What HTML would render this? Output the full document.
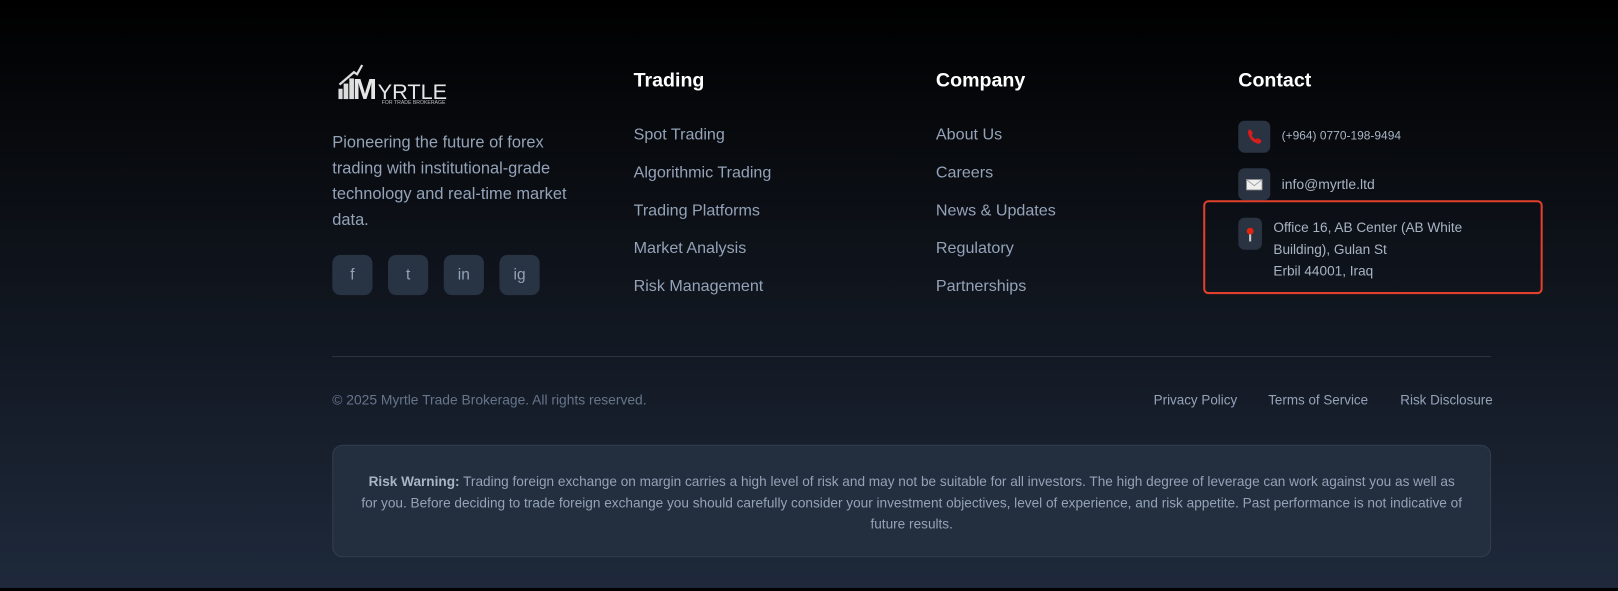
<!DOCTYPE html>
<html><head><meta charset="utf-8"><style>
*{margin:0;padding:0;box-sizing:border-box}
html,body{width:1618px;height:591px;overflow:hidden;background:#000}
body{font-family:"Liberation Sans",sans-serif;position:relative}
.bg{position:absolute;left:0;top:0;width:1618px;height:588px;background:linear-gradient(180deg,#000 0%,#0d1118 40%,#1e293b 100%)}
.w{position:absolute;left:0;top:0;width:1568px;height:573px;transform:scale(1.0319);transform-origin:0 0}
.a{position:absolute}
.t{color:#94a3b8}
h3{position:absolute;color:#fff;font-size:19px;font-weight:bold;top:68px}
.lk{position:absolute;color:#94a3b8;font-size:15.6px}
.soc{position:absolute;top:247px;width:39px;height:39px;border-radius:8px;background:#283344;color:#94a3b8;font-size:15px;text-align:center;line-height:39px}
.ic{position:absolute;width:31px;height:31px;border-radius:6px;background:#2a3342}
</style></head><body>
<div class="bg"></div>
<div class="w">
<div class="a" style="left:326px;top:60px;width:110px;height:42px">
<svg width="110" height="42" viewBox="0 0 110 42">
<rect x="2" y="26" width="4" height="10" fill="#ddd"/><rect x="7" y="21" width="4.5" height="15" fill="#ddd"/><rect x="12.5" y="16" width="4.5" height="20" fill="#ddd"/>
<path d="M3 22 L17 10 L20 12 L25 3" stroke="#ddd" stroke-width="2.2" fill="none"/>
<text x="16" y="36" fill="#e5e5e5" font-family="Liberation Sans" font-weight="bold" font-size="28">M</text>
<text x="40" y="36" fill="#e5e5e5" font-family="Liberation Sans" font-size="21">YRTLE</text>
<text x="44" y="41" fill="#bbb" font-family="Liberation Sans" font-size="5">FOR TRADE BROKERAGE</text>
</svg></div>
<div class="a t" style="left:322px;top:126px;width:240px;font-size:15.9px;line-height:25px">Pioneering the future of forex trading with institutional-grade technology and real-time market data.</div>
<div class="soc" style="left:322px">f</div><div class="soc" style="left:376px">t</div><div class="soc" style="left:430px">in</div><div class="soc" style="left:484px">ig</div>

<h3 style="left:614px">Trading</h3>
<div class="lk" style="left:614px;top:122px">Spot Trading</div>
<div class="lk" style="left:614px;top:159px">Algorithmic Trading</div>
<div class="lk" style="left:614px;top:196px">Trading Platforms</div>
<div class="lk" style="left:614px;top:232px">Market Analysis</div>
<div class="lk" style="left:614px;top:269px">Risk Management</div>

<h3 style="left:907px">Company</h3>
<div class="lk" style="left:907px;top:122px">About Us</div>
<div class="lk" style="left:907px;top:159px">Careers</div>
<div class="lk" style="left:907px;top:196px">News &amp; Updates</div>
<div class="lk" style="left:907px;top:232px">Regulatory</div>
<div class="lk" style="left:907px;top:269px">Partnerships</div>

<h3 style="left:1200px">Contact</h3>
<div class="ic" style="left:1200px;top:117px"><svg width="31" height="31"><path d="M10 9 q2-1 3 1 l1 2 q0 1-1 2 q1 3 4 4 q1-1 2-1 l2 1 q2 1 1 3 q-2 2-4 1 q-6-2-8-8 q-1-3 0-5z" fill="#d91c1c"/></svg></div>
<div class="lk" style="left:1242px;top:125px;font-size:11.6px;color:#a9b4c4">(+964) 0770-198-9494</div>
<div class="ic" style="left:1200px;top:163px"><svg width="31" height="31"><rect x="8" y="11" width="15" height="10" fill="#eee" stroke="#999" stroke-width=".8"/><path d="M8 11 l7.5 6 l7.5-6" stroke="#999" stroke-width=".8" fill="none"/></svg></div>
<div class="lk" style="left:1242px;top:171px;font-size:13.5px;color:#a9b4c4">info@myrtle.ltd</div>
<div class="a" style="left:1166px;top:194px;width:329px;height:91px;border:2px solid #e0402c;border-radius:5px"></div>
<div class="ic" style="left:1200px;top:211px;width:23px"><svg width="23" height="31"><rect x="10.5" y="14" width="2" height="9" fill="#ccc"/><circle cx="11.5" cy="13" r="3.3" fill="#e32410"/></svg></div>
<div class="lk" style="left:1234px;top:210px;font-size:13.2px;line-height:21px;color:#a9b4c4;width:220px">Office 16, AB Center (AB White Building), Gulan St<br>Erbil 44001, Iraq</div>

<div class="a" style="left:322px;top:345px;width:1123px;height:1px;background:#2b3443"></div>
<div class="a" style="left:322px;top:380px;font-size:13.4px;color:#66758a">© 2025 Myrtle Trade Brokerage. All rights reserved.</div>
<div class="a" style="left:1118px;top:380px;font-size:13px;color:#94a3b8">Privacy Policy</div>
<div class="a" style="left:1229px;top:380px;font-size:13px;color:#94a3b8">Terms of Service</div>
<div class="a" style="left:1357px;top:380px;font-size:13px;color:#94a3b8">Risk Disclosure</div>

<div class="a" style="left:322px;top:431px;width:1123px;height:109px;background:#232e3e;border:1px solid #323d4d;border-radius:10px;padding:25px 26px 0;text-align:center;font-size:13.2px;line-height:20.5px;color:#94a3b8"><b style="color:#a9b4c4">Risk Warning:</b> Trading foreign exchange on margin carries a high level of risk and may not be suitable for all investors. The high degree of leverage can work against you as well as for you. Before deciding to trade foreign exchange you should carefully consider your investment objectives, level of experience, and risk appetite. Past performance is not indicative of future results.</div>
</div>
</body></html>
